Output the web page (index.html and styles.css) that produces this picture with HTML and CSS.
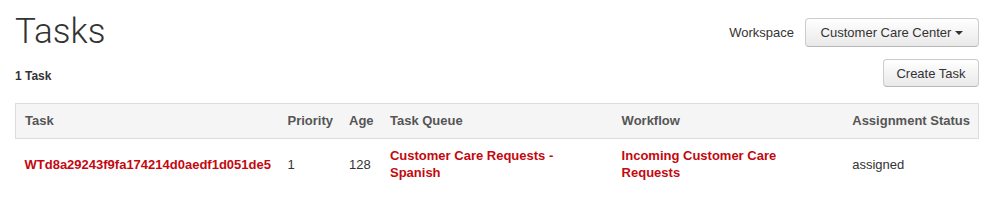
FILE: index.html
```html
<!DOCTYPE html>
<html lang="en">
<head>
    <meta charset="UTF-8">
    <title>Tasks</title>
    <link rel="stylesheet" href="styles.css">
</head>
<body>
    <div class="page">
        <!-- Header with title and workspace picker -->
        <div class="page-header">
            <h1 class="page-title">Tasks</h1>
            <div class="workspace">
                <span class="workspace-label">Workspace</span>
                <div class="btn dropdown">Customer Care Center <span class="caret"></span></div>
            </div>
        </div>

        <div class="toolbar">
            <span class="task-count">1 Task</span>
            <div class="btn">Create Task</div>
        </div>

        <!-- Tasks table -->
        <table class="task-table">
            <thead>
                <tr>
                    <th class="col-task">Task</th>
                    <th class="col-priority">Priority</th>
                    <th class="col-age">Age</th>
                    <th class="col-queue">Task Queue</th>
                    <th class="col-workflow">Workflow</th>
                    <th>Assignment Status</th>
                </tr>
            </thead>
            <tbody>
                <tr>
                    <td><a class="link" href="#">WTd8a29243f9fa174214d0aedf1d051de5</a></td>
                    <td>1</td>
                    <td>128</td>
                    <td><a class="link" href="#">Customer Care Requests - Spanish</a></td>
                    <td><a class="link" href="#">Incoming Customer Care Requests</a></td>
                    <td>assigned</td>
                </tr>
            </tbody>
        </table>
    </div>
</body>
</html>
```

FILE: styles.css
```css
* {
    margin: 0;
    padding: 0;
    box-sizing: border-box;
}

body {
    font-family: "Liberation Sans", Arial, Helvetica, sans-serif;
    font-size: 13px;
    color: #333;
    background-color: #fff;
}

.page {
    padding: 0 17px 0 15px;
}

/* Header */
.page-header {
    display: flex;
    justify-content: space-between;
    align-items: flex-start;
    padding-top: 8px;
}

.page-title {
    font-family: Roboto, "Liberation Sans", sans-serif;
    font-weight: 300;
    font-size: 35px;
    line-height: 48px;
    color: #333;
}

.workspace {
    display: flex;
    align-items: center;
    gap: 11px;
    margin-top: 10px;
}

.workspace-label {
    color: #333;
}

.btn {
    display: inline-flex;
    align-items: center;
    justify-content: center;
    height: 29px;
    padding: 0 12px;
    border: 1px solid #ccc;
    border-bottom-color: #b8b8b8;
    border-radius: 4px;
    background: linear-gradient(#fff, #e9e9e9);
    color: #333;
    font-size: 13px;
    cursor: pointer;
}

.dropdown {
    width: 174px;
    gap: 4px;
}

.caret {
    width: 0;
    height: 0;
    border-left: 4px solid transparent;
    border-right: 4px solid transparent;
    border-top: 4px solid #333;
}

.toolbar {
    display: flex;
    justify-content: space-between;
    align-items: center;
    margin-top: 3px;
}

.task-count {
    font-weight: bold;
    font-size: 12px;
    padding-top: 6px;
}

.toolbar .btn {
    width: 96px;
    height: 28px;
}

/* Table */
.task-table {
    width: 100%;
    margin-top: 16px;
    border-collapse: collapse;
}

.task-table th {
    background-color: #f5f5f5;
    color: #555;
    font-weight: bold;
    text-align: left;
    white-space: nowrap;
    padding: 8px;
    line-height: 18px;
    border-top: 1px solid #ddd;
    border-bottom: 1px solid #ddd;
}

.task-table th:first-child {
    border-left: 1px solid #ddd;
}

.task-table th:last-child {
    border-right: 1px solid #ddd;
}

.task-table td {
    padding: 8px;
    line-height: 17px;
    vertical-align: middle;
    color: #333;
}

.task-table td:first-child,
.task-table th:first-child {
    padding-left: 9px;
}

.col-task {
    width: 264px;
}

.col-priority {
    width: 61px;
}

.col-age {
    width: 41px;
}

.col-queue {
    width: 232px;
}

.col-workflow {
    width: 231px;
}

.link {
    color: #c4080f;
    font-weight: bold;
    text-decoration: none;
}
```
